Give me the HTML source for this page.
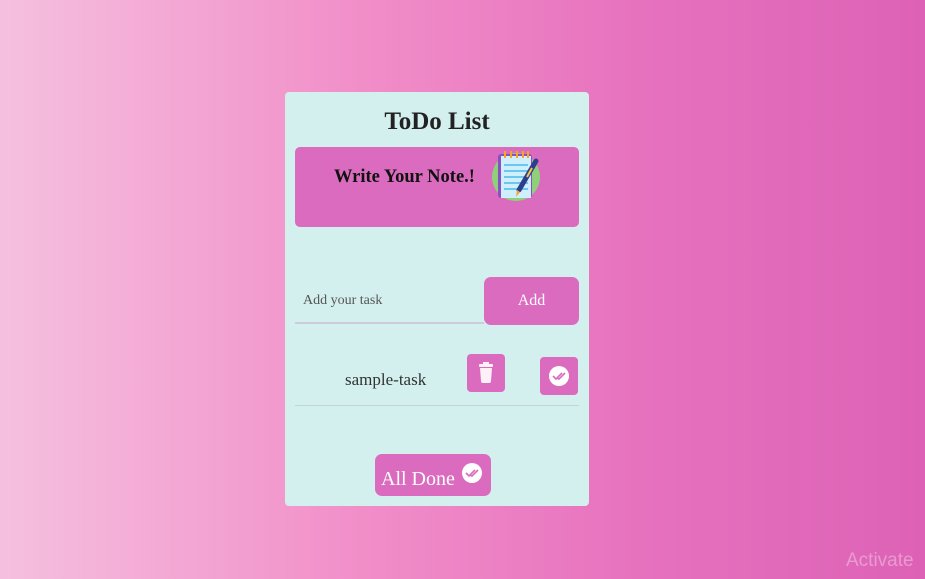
<!DOCTYPE html>
<html><head><meta charset="utf-8">
<style>
*{margin:0;padding:0;box-sizing:border-box}
html,body{width:925px;height:579px;overflow:hidden}
body{background:linear-gradient(90deg,#f5c0df 0%,#f18dc8 40%,#e671be 70%,#dd62b6 100%);font-family:"Liberation Serif",serif;position:relative}
.card{position:absolute;left:285px;top:92px;width:304px;height:414px;background:#d3f0ef;border-radius:4px}
h1{position:absolute;top:16px;left:0;width:100%;text-align:center;font-size:25px;font-weight:bold;color:#222}
.note{position:absolute;left:10px;top:55px;width:284px;height:80px;background:#da6bbf;border-radius:5px}
.note span{position:absolute;left:39px;top:20px;font-size:18.5px;font-weight:bold;color:#111}
.note svg{position:absolute;left:196px;top:3px}
.input{position:absolute;left:10px;top:187px;width:189px;height:45px;border-bottom:2px solid #ccd;font-size:14px;color:#555;padding:14px 0 0 8px}
.add{position:absolute;left:199px;top:185px;width:95px;height:48px;background:#da6bbf;border-radius:7px;color:#fff;font-size:16px;text-align:center;line-height:48px}
.task{position:absolute;left:60px;top:278px;font-size:17px;color:#333}
.del{position:absolute;left:182px;top:262px;width:38px;height:38px;background:#da6bbf;border-radius:4px}
.chk{position:absolute;left:255px;top:265px;width:38px;height:38px;background:#da6bbf;border-radius:4px}
.line{position:absolute;left:10px;top:313px;width:284px;height:1px;background:#c9d3d3}
.all{position:absolute;left:90px;top:362px;width:116px;height:42px;background:#da6bbf;border-radius:7px;color:#fff;font-size:20px}
.all span{position:absolute;left:6px;top:14px}
.all svg{position:absolute;left:86px;top:8px}
.wm{position:absolute;left:846px;top:550px;font-family:"Liberation Sans",sans-serif;font-size:19px;color:rgba(255,255,255,.35)}
</style></head><body>
<div class="card">
<h1>ToDo List</h1>
<div class="note"><span>Write Your Note.!</span>
<svg width="52" height="52" viewBox="0 0 52 52">
<circle cx="25" cy="27" r="24" fill="#8fd07a"/>
<rect x="7" y="4" width="34" height="44" rx="3" fill="#8a4fc0"/>
<rect x="10" y="6" width="30" height="42" fill="#cfeffc"/>
<g stroke="#6cc7f0" stroke-width="2"><line x1="13" y1="15" x2="37" y2="15"/><line x1="13" y1="21" x2="37" y2="21"/><line x1="13" y1="27" x2="37" y2="27"/><line x1="13" y1="33" x2="37" y2="33"/><line x1="13" y1="39" x2="37" y2="39"/></g>
<g stroke="#f5a623" stroke-width="2"><line x1="14" y1="1" x2="14" y2="8"/><line x1="20" y1="1" x2="20" y2="8"/><line x1="26" y1="1" x2="26" y2="8"/><line x1="32" y1="1" x2="32" y2="8"/><line x1="37" y1="1" x2="37" y2="8"/></g>
<line x1="45" y1="11" x2="28" y2="40" stroke="#2e3e8c" stroke-width="5" stroke-linecap="round"/>
<line x1="41" y1="18" x2="36" y2="27" stroke="#f5c542" stroke-width="2"/>
<polygon points="26,40 29,42 25,47" fill="#f5a623"/>
</svg></div>
<div class="input">Add your task</div>
<div class="add">Add</div>
<div class="task">sample-task</div>
<div class="del"><svg width="38" height="38" viewBox="0 0 38 38"><rect x="12" y="10" width="14" height="3" rx="1" fill="#fdf1f7"/><rect x="16" y="8" width="6" height="3" fill="#fdf1f7"/><path d="M13 14h12l-1 13a2 2 0 0 1-2 2h-6a2 2 0 0 1-2-2z" fill="#fdf1f7"/></svg></div>
<div class="chk"><svg width="38" height="38" viewBox="0 0 38 38"><circle cx="19" cy="19" r="10" fill="#fff"/><path d="M13 19l3 3 6-6M17 21l2 1 6-6" stroke="#da6bbf" stroke-width="1.6" fill="none"/></svg></div>
<div class="line"></div>
<div class="all"><span>All Done</span><svg width="22" height="22" viewBox="0 0 22 22"><circle cx="11" cy="11" r="10" fill="#fff"/><path d="M5 11l3 3 6-6M9 13l2 1 6-6" stroke="#da6bbf" stroke-width="1.6" fill="none"/></svg></div>
</div>
<div class="wm">Activate</div>
</body></html>
